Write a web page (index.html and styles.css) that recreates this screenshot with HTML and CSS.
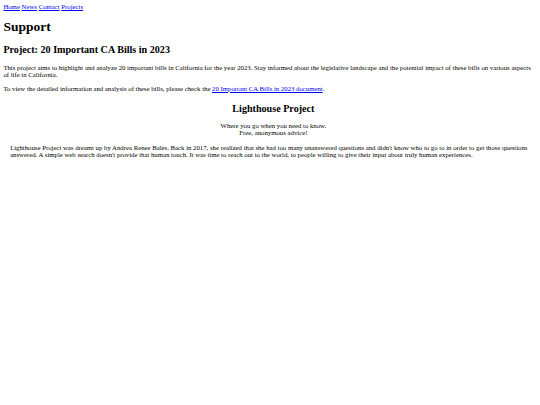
FILE: index.html
```html
<!DOCTYPE html>
<html>
<head>
<meta charset="utf-8">
<link rel="stylesheet" href="styles.css">
</head>
<body>
<nav class="nav"><a href="#">Home</a> <a href="#">News</a> <a href="#">Contact</a> <a href="#">Projects</a></nav>
<h1 class="title">Support</h1>
<h2 class="project-title">Project: 20 Important CA Bills in 2023</h2>
<p>This project aims to highlight and analyze 20 important bills in California for the year 2023. Stay informed about the legislative landscape and the potential impact of these bills on various aspects of life in California.</p>
<p>To view the detailed information and analysis of these bills, please check the <a href="#">20 Important CA Bills in 2023 document</a>.</p>
<section class="lighthouse">
<h2 class="center">Lighthouse Project</h2>
<p class="center">Where you go when you need to know.<br>Free, anonymous advice!</p>
<p class="story">Lighthouse Project was dreamt up by Andrea Renee Bales. Back in 2017, she realized that she had too many unanswered questions and didn't know who to go to in order to get those questions answered. A simple web search doesn't provide that human touch. It was time to reach out to the world, to people willing to give their input about truly human experiences.</p>
</section>
</body>
</html>
```
FILE: styles.css
```css
html { background: #fff; }
body {
  margin: 3.375px;
  font-family: "Liberation Serif", "Times New Roman", serif;
  font-size: 6.75px;
  color: #000;
}
a { color: #0000ee; }
.title { font-size: 2em; margin: 0.67em 0; }
.project-title { font-size: 1.5em; margin: 0.83em 0; }
p { margin: 1em 0; }
.lighthouse { margin-top: 11.5px; padding-left: 1em; }
.center { text-align: center; }
.story { margin-top: 7.75px; }
```
